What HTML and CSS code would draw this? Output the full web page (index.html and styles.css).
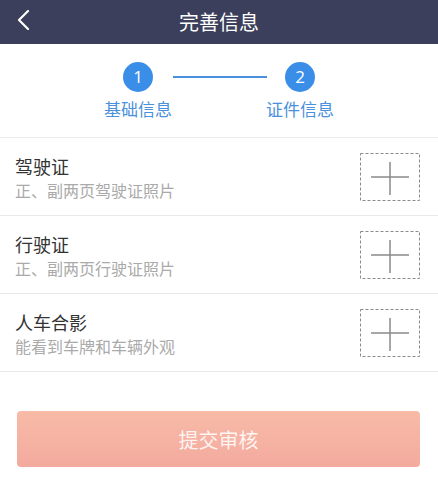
FILE: index.html
```html
<!DOCTYPE html>
<html lang="zh-CN">
<head>
  <meta charset="UTF-8" />
  <meta name="viewport" content="width=device-width, initial-scale=1.0"/>
  <title>完善信息</title>
  <link rel="stylesheet" href="styles.css">
</head>
<body>
  <header class="topbar">
    <a class="back" href="#">
      <svg width="14" height="20" viewBox="0 0 14 20">
        <polyline points="11,1 2,10 11,19" fill="none" stroke="#fff" stroke-width="2.2" stroke-linecap="round" stroke-linejoin="round"/>
      </svg>
    </a>
    <h1>完善信息</h1>
  </header>

  <div class="steps">
    <div class="step">
      <span class="dot">1</span>
      <span class="step-label">基础信息</span>
    </div>
    <div class="step-line"></div>
    <div class="step">
      <span class="dot">2</span>
      <span class="step-label">证件信息</span>
    </div>
  </div>

  <div class="uploads">
    <div class="upload-row">
      <div class="upload-text">
        <div class="upload-title">驾驶证</div>
        <div class="upload-sub">正、副两页驾驶证照片</div>
      </div>
      <svg class="add-box" width="60" height="48" viewBox="0 0 60 48">
        <rect x="0.5" y="0.5" width="59" height="47" fill="none" stroke="#8a8a8a" stroke-dasharray="3 2"/>
        <line x1="11" y1="24" x2="49" y2="24" stroke="#8a8a8a" stroke-width="1.5"/>
        <line x1="30" y1="9" x2="30" y2="42" stroke="#8a8a8a" stroke-width="1.5"/>
      </svg>
    </div>
    <div class="upload-row">
      <div class="upload-text">
        <div class="upload-title">行驶证</div>
        <div class="upload-sub">正、副两页行驶证照片</div>
      </div>
      <svg class="add-box" width="60" height="48" viewBox="0 0 60 48">
        <rect x="0.5" y="0.5" width="59" height="47" fill="none" stroke="#8a8a8a" stroke-dasharray="3 2"/>
        <line x1="11" y1="24" x2="49" y2="24" stroke="#8a8a8a" stroke-width="1.5"/>
        <line x1="30" y1="9" x2="30" y2="42" stroke="#8a8a8a" stroke-width="1.5"/>
      </svg>
    </div>
    <div class="upload-row">
      <div class="upload-text">
        <div class="upload-title">人车合影</div>
        <div class="upload-sub">能看到车牌和车辆外观</div>
      </div>
      <svg class="add-box" width="60" height="48" viewBox="0 0 60 48">
        <rect x="0.5" y="0.5" width="59" height="47" fill="none" stroke="#8a8a8a" stroke-dasharray="3 2"/>
        <line x1="11" y1="24" x2="49" y2="24" stroke="#8a8a8a" stroke-width="1.5"/>
        <line x1="30" y1="9" x2="30" y2="42" stroke="#8a8a8a" stroke-width="1.5"/>
      </svg>
    </div>
  </div>

  <button class="submit" disabled>提交审核</button>
</body>
</html>
```

FILE: styles.css
```css
body {
  margin: 0;
  font-family: "Noto Sans CJK SC", "Noto Sans", sans-serif;
  background: #fff;
  color: #333;
}

.topbar {
  height: 44px;
  background: #3c3f5b;
  display: flex;
  align-items: center;
  justify-content: center;
  position: relative;
}

.topbar h1 {
  margin: 0;
  font-size: 20px;
  font-weight: normal;
  color: #fff;
  line-height: 44px;
}

.back {
  position: absolute;
  left: 17px;
  top: 10px;
  display: block;
  height: 20px;
}

.steps {
  height: 94px;
  display: flex;
  justify-content: center;
  align-items: flex-start;
  padding-top: 18px;
  box-sizing: border-box;
  border-bottom: 1px solid #ebebeb;
}

.step {
  width: 70px;
  display: flex;
  flex-direction: column;
  align-items: center;
}

.dot {
  width: 30px;
  height: 30px;
  border-radius: 50%;
  background: #3a8ee8;
  color: #fff;
  font-family: "Open Sans", sans-serif;
  font-size: 17px;
  line-height: 30px;
  text-align: center;
}

.step-label {
  margin-top: 5px;
  font-size: 17px;
  line-height: 24px;
  color: #4a90dc;
}

.step-line {
  width: 94px;
  height: 2px;
  margin: 14px -2px 0 0;
  background: #4a90dc;
}

.upload-row {
  height: 77px;
  display: flex;
  align-items: center;
  justify-content: space-between;
  padding: 0 18px 0 15px;
  border-bottom: 1px solid #e8e8e8;
}

.upload-title {
  font-size: 18px;
  line-height: 24px;
  color: #333;
}

.upload-sub {
  margin-top: 2px;
  font-size: 16px;
  line-height: 20px;
  color: #aaa;
}

.add-box {
  display: block;
}

.submit {
  display: block;
  margin: 39px 18px 0 17px;
  width: 403px;
  height: 56px;
  border: none;
  border-radius: 4px;
  background: linear-gradient(to bottom, #f8bba7, #f3aa9f);
  color: rgba(255, 255, 255, 0.88);
  font-family: "Noto Sans CJK SC", sans-serif;
  font-size: 20px;
}
```
